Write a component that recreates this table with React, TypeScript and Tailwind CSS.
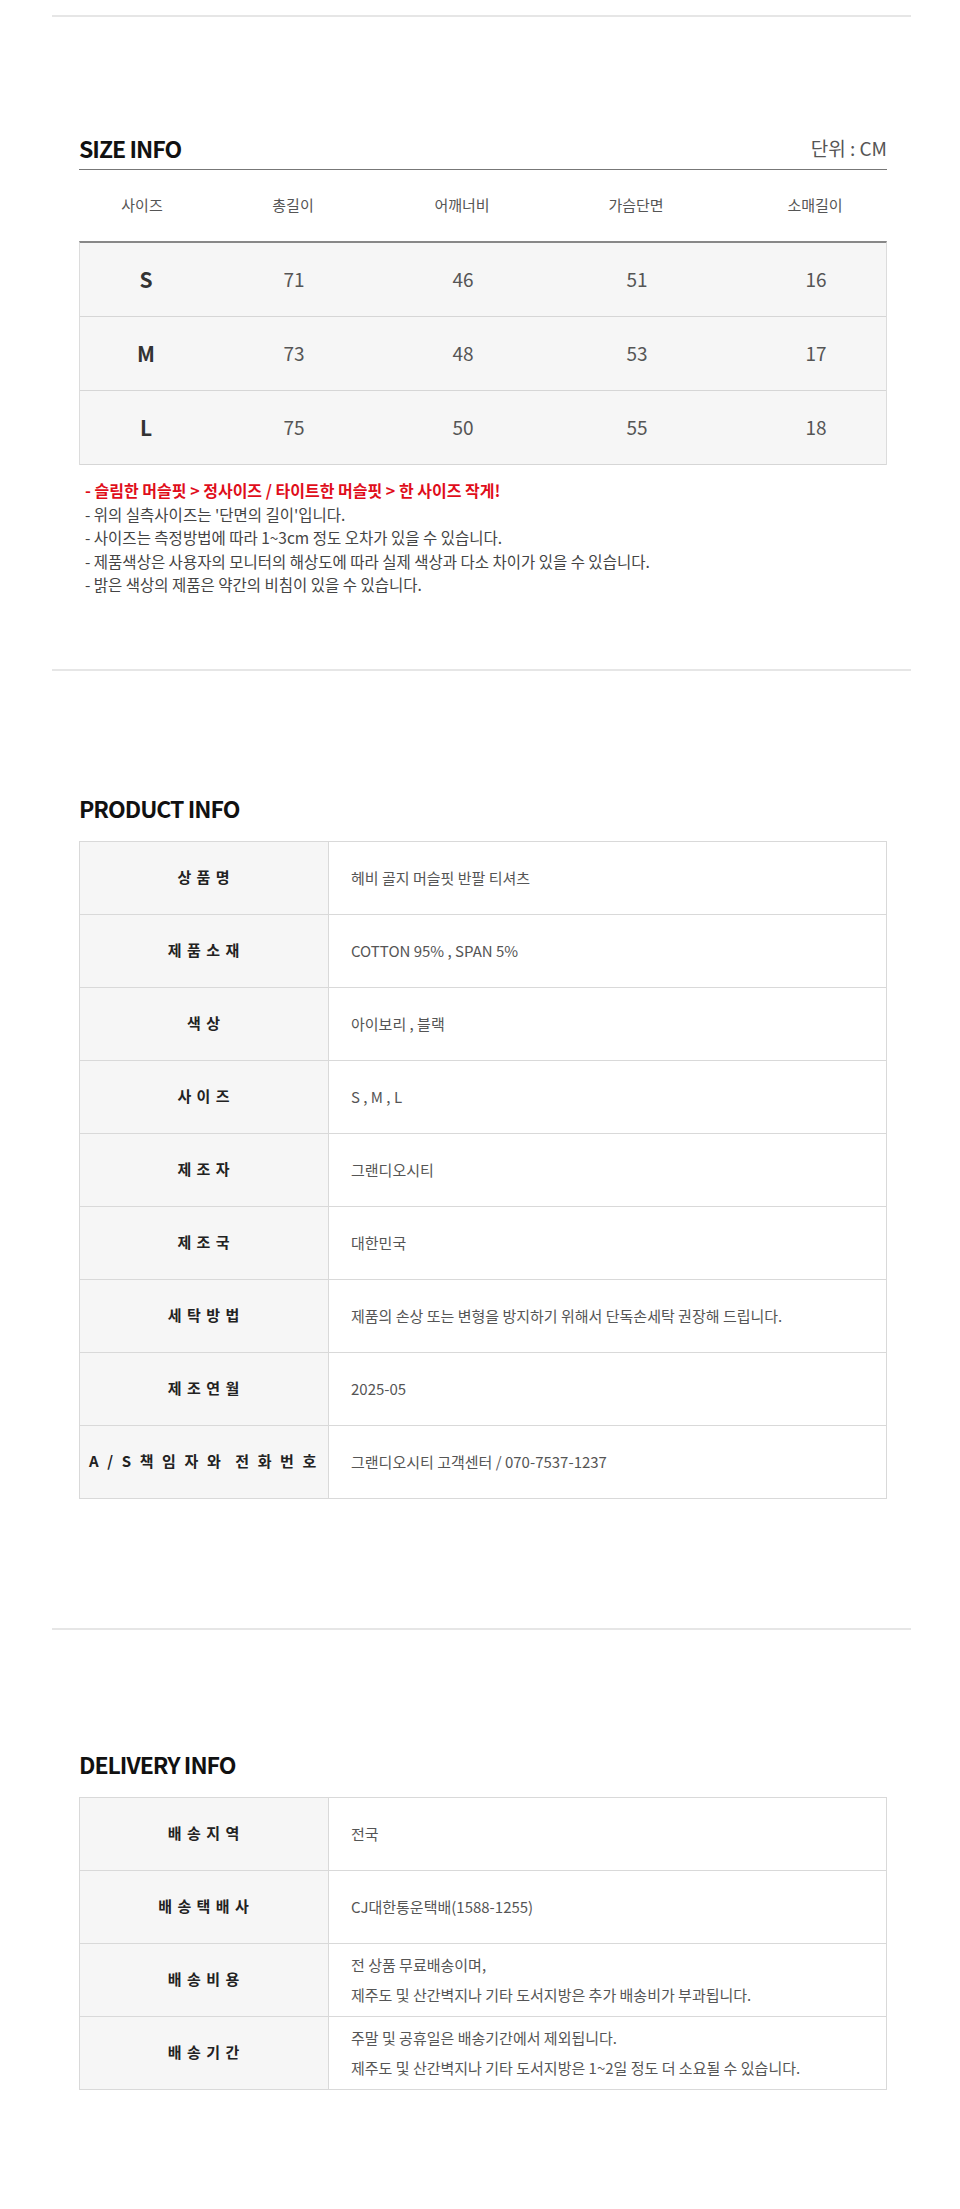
import React from "react";

const font = { fontFamily: '"Noto Sans CJK KR", "Noto Sans", sans-serif' };

const sizeRows = [
  ["S", "71", "46", "51", "16"],
  ["M", "73", "48", "53", "17"],
  ["L", "75", "50", "55", "18"],
];

const productRows: [string, string[]][] = [
  ["상 품 명", ["헤비 골지 머슬핏 반팔 티셔츠"]],
  ["제 품 소 재", ["COTTON 95% , SPAN 5%"]],
  ["색 상", ["아이보리 , 블랙"]],
  ["사 이 즈", ["S , M , L"]],
  ["제 조 자", ["그랜디오시티"]],
  ["제 조 국", ["대한민국"]],
  ["세 탁 방 법", ["제품의 손상 또는 변형을 방지하기 위해서 단독손세탁 권장해 드립니다."]],
  ["제 조 연 월", ["2025-05"]],
  ["A / S 책 임 자 와 \u00a0전 화 번 호", ["그랜디오시티 고객센터 / 070-7537-1237"]],
];

const deliveryRows: [string, string[]][] = [
  ["배 송 지 역", ["전국"]],
  ["배 송 택 배 사", ["CJ대한통운택배(1588-1255)"]],
  ["배 송 비 용", ["전 상품 무료배송이며,", "제주도 및 산간벽지나 기타 도서지방은 추가 배송비가 부과됩니다."]],
  ["배 송 기 간", ["주말 및 공휴일은 배송기간에서 제외됩니다.", "제주도 및 산간벽지나 기타 도서지방은 1~2일 정도 더 소요될 수 있습니다."]],
];

function Separator({ className = "" }: { className?: string }) {
  return <div className={`ml-[52px] h-[2px] w-[859px] bg-[#e6e6e6] ${className}`} />;
}

function InfoTable({ rows }: { rows: [string, string[]][] }) {
  return (
    <div className="border border-b-0 border-[#d9d9d9]">
      {rows.map(([label, values], i) => (
        <div key={i} className="flex h-[73px] border-b border-[#d9d9d9]">
          <div
            className={`flex w-[249px] shrink-0 items-center justify-center border-r border-[#d9d9d9] bg-[#f6f6f6] text-[15px] font-bold text-[#222] ${
              label.startsWith("A") ? "tracking-[2.6px]" : "tracking-[1px]"
            }`}
          >
            {label}
          </div>
          <div className="flex flex-col justify-center pl-[22px] text-[15px] leading-[30px] text-[#555]">
            {values.map((v, j) => (
              <div key={j}>{v}</div>
            ))}
          </div>
        </div>
      ))}
    </div>
  );
}

export default function App() {
  const cols = "grid grid-cols-[126px_176px_162px_186px_158px]";
  return (
    <div className="min-h-[2209px] w-[960px] bg-white" style={font}>
      <div className="h-[15px]" />
      <Separator />

      <div className="ml-[79px] w-[808px]">
        {/* SIZE INFO */}
        <div className="mt-[116px] flex items-end justify-between border-b border-[#777] pb-[6px]">
          <h2 className="text-[23px] font-bold leading-[30px] tracking-[-1px] text-[#111]">SIZE INFO</h2>
          <span className="text-[19px] leading-[30px] text-[#555]">단위 : CM</span>
        </div>
        <div className={`${cols} h-[71px] items-center text-center text-[15px] text-[#555]`}>
          <div>사이즈</div>
          <div>총길이</div>
          <div>어깨너비</div>
          <div>가슴단면</div>
          <div className="pl-[14px]">소매길이</div>
        </div>
        <div className="border-x border-t-2 border-x-[#dcdcdc] border-t-[#888] bg-[#f6f6f6]">
          {sizeRows.map((r, i) => (
            <div key={i} className={`${cols} h-[74px] items-center border-b border-[#d6d6d6] text-center text-[19px] text-[#555]`}>
              <div className="pl-[6px] text-[21px] font-bold text-[#333]">{r[0]}</div>
              <div>{r[1]}</div>
              <div>{r[2]}</div>
              <div>{r[3]}</div>
              <div className="pl-[14px]">{r[4]}</div>
            </div>
          ))}
        </div>
        <div className="mt-[14px] pl-[6px] text-[15.5px] leading-[23.5px] text-[#444]">
          <div className="text-[16px] font-bold tracking-[0px] text-[#e00d1a]">
            - 슬림한 머슬핏 &gt; 정사이즈 / 타이트한 머슬핏 &gt; 한 사이즈 작게!
          </div>
          <div>- 위의 실측사이즈는 '단면의 길이'입니다.</div>
          <div>- 사이즈는 측정방법에 따라 1~3cm 정도 오차가 있을 수 있습니다.</div>
          <div>- 제품색상은 사용자의 모니터의 해상도에 따라 실제 색상과 다소 차이가 있을 수 있습니다.</div>
          <div>- 밝은 색상의 제품은 약간의 비침이 있을 수 있습니다.</div>
        </div>
      </div>

      <Separator className="mt-[72px]" />

      <div className="ml-[79px] w-[808px]">
        <h2 className="mt-[122px] text-[23px] font-bold leading-[30px] tracking-[-1px] text-[#111]">PRODUCT INFO</h2>
        <div className="mt-[18px]">
          <InfoTable rows={productRows} />
        </div>
      </div>

      <Separator className="mt-[129px]" />

      <div className="ml-[79px] w-[808px]">
        <h2 className="mt-[119px] text-[23px] font-bold leading-[30px] tracking-[-1px] text-[#111]">DELIVERY INFO</h2>
        <div className="mt-[18px]">
          <InfoTable rows={deliveryRows} />
        </div>
      </div>
      <div className="h-[118px]" />
    </div>
  );
}
